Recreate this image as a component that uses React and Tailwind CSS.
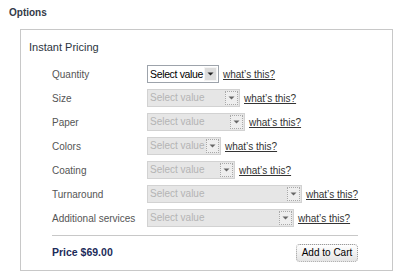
import React from 'react';

const rows = [
  { label: 'Quantity', w: 72, enabled: true },
  { label: 'Size', w: 93 },
  { label: 'Paper', w: 98 },
  { label: 'Colors', w: 74 },
  { label: 'Coating', w: 88 },
  { label: 'Turnaround', w: 155 },
  { label: 'Additional services', w: 147 },
];

const Arrow = ({ enabled }) => (
  <svg width="7" height="4" viewBox="0 0 7 4">
    <path d="M0.5 0.5h6L3.5 3.5z" fill={enabled ? '#222' : '#666'} />
  </svg>
);

const FakeSelect = ({ w, enabled }) => (
  <div
    style={{ width: w }}
    className={`h-[18px] flex items-center justify-between border pl-[2px] pr-[1px] ${
      enabled ? 'bg-white border-[#9da3ab]' : 'bg-[#e6e6e6] border-[#d2d2d2]'
    }`}
  >
    <span
      className={`whitespace-nowrap ${
        enabled ? 'text-[10.5px] tracking-[-0.35px] text-black' : 'text-[10px] text-[#b4b4b4]'
      } leading-[14px]`}
    >
      Select value
    </span>
    <span
      className={`shrink-0 w-[13px] h-[14px] flex items-center justify-center ${
        enabled ? 'bg-[#dcdcdc] border border-[#f4f4f4]' : 'bg-[#eeeeee] border border-dotted border-[#a8a8a8]'
      }`}
    >
      <Arrow enabled={enabled} />
    </span>
  </div>
);

export default function App() {
  return (
    <div className="w-[400px] h-[275px] bg-white font-['Liberation_Sans',Arial,sans-serif]">
      <div className="pl-[9px] pt-[7px] text-[10px] leading-[12px] font-bold text-[#333a48]">Options</div>

      <div className="ml-[20px] mt-[10px] w-[373px] h-[242px] border border-[#c8c8c8]">
        <div className="pl-[8px] pt-[10px] text-[11px] leading-[14px] text-[#2c3540]">Instant Pricing</div>

        <div className="ml-[31px] mt-[8px]">
          {rows.map((r) => (
            <div key={r.label} className="h-[24px] flex items-center">
              <span className="w-[95px] text-[10px] text-[#555]">{r.label}</span>
              <FakeSelect w={r.w} enabled={r.enabled} />
              <a href="#" className="ml-[4px] text-[10px] text-[#333] underline">what&rsquo;s this?</a>
            </div>
          ))}
        </div>

        <div className="ml-[31px] mt-[5px] w-[306px] border-t border-[#c8c8c8] pt-[8px] flex items-center justify-between">
          <span className="text-[10.5px] font-bold text-[#1c2b5a]">Price $69.00</span>
          <button className="h-[18px] w-[62px] rounded-[4px] border border-dotted border-[#9a9a9a] bg-gradient-to-b from-white to-[#e4e4e4] text-[10px] text-black leading-none">
            Add to Cart
          </button>
        </div>
      </div>
    </div>
  );
}
